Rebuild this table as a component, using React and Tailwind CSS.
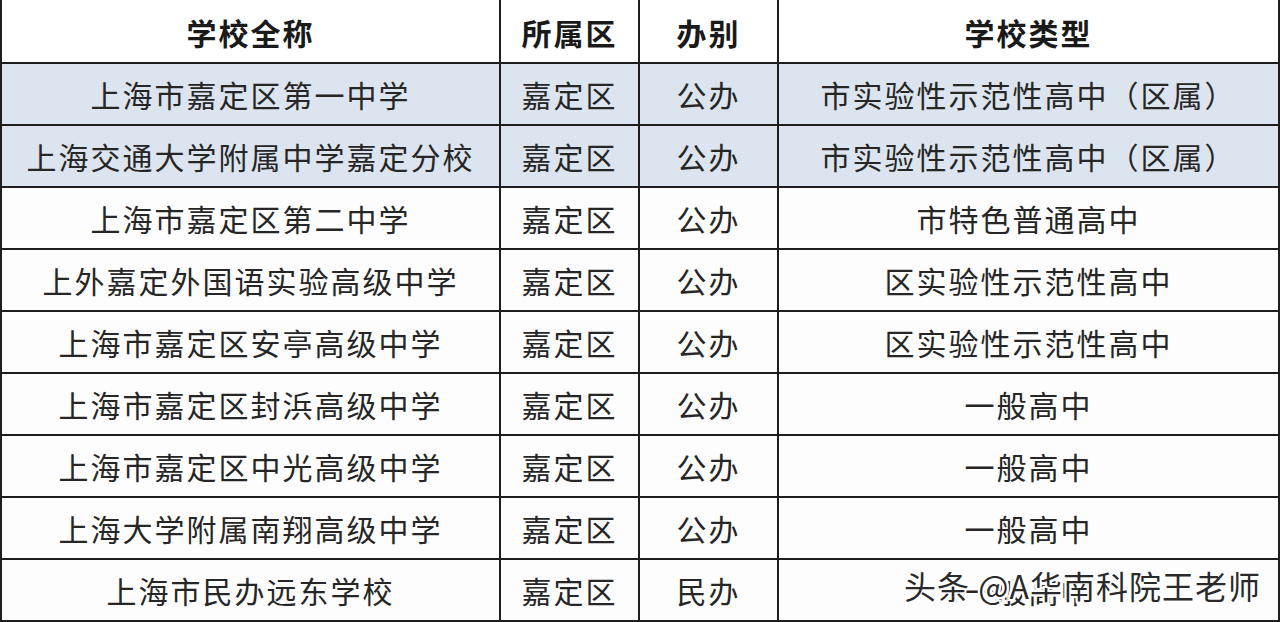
import React from 'react';

const rows = [
  ['上海市嘉定区第一中学', '嘉定区', '公办', '市实验性示范性高中（区属）', true],
  ['上海交通大学附属中学嘉定分校', '嘉定区', '公办', '市实验性示范性高中（区属）', true],
  ['上海市嘉定区第二中学', '嘉定区', '公办', '市特色普通高中', false],
  ['上外嘉定外国语实验高级中学', '嘉定区', '公办', '区实验性示范性高中', false],
  ['上海市嘉定区安亭高级中学', '嘉定区', '公办', '区实验性示范性高中', false],
  ['上海市嘉定区封浜高级中学', '嘉定区', '公办', '一般高中', false],
  ['上海市嘉定区中光高级中学', '嘉定区', '公办', '一般高中', false],
  ['上海大学附属南翔高级中学', '嘉定区', '公办', '一般高中', false],
  ['上海市民办远东学校', '嘉定区', '民办', '一般高中', false],
];

const font = { fontFamily: '"Noto Sans CJK SC", "Noto Sans", sans-serif' };

const App = () => {
  return (
    <div className="w-[1280px] h-[622px] bg-white relative overflow-hidden" style={font}>
      <div className="grid grid-cols-[497px_137px_137px_1fr] grid-rows-[62px_repeat(9,60px)] gap-[2px] px-[2px] pb-[2px] bg-[#1e1e1e] h-full">
        {['学校全称', '所属区', '办别', '学校类型'].map((h) => (
          <div key={h} className="bg-white flex items-center justify-center pt-[2px] text-[30px] font-bold tracking-[2px] text-[#1a1a1a]">
            {h}
          </div>
        ))}
        {rows.map((r, i) =>
          r.slice(0, 4).map((c, j) => (
            <div
              key={i + '-' + j}
              className={`flex items-center justify-center text-[30px] tracking-[2px] text-[#262626] ${r[4] ? 'bg-[#dce5ef]' : 'bg-[#fdfdfd]'}`}
            >
              {c}
            </div>
          ))
        )}
      </div>
      {/* 水印 */}
      <div
        className="absolute left-[904px] top-[569px] text-[32px] tracking-[1px] text-[#2a2a2a] whitespace-nowrap leading-none"
        style={{
          textShadow:
            '2px 0 0 #fff, -2px 0 0 #fff, 0 2px 0 #fff, 0 -2px 0 #fff, 2px 2px 0 #fff, -2px -2px 0 #fff, 2px -2px 0 #fff, -2px 2px 0 #fff',
        }}
      >
        头条 @A华南科院王老师
      </div>
    </div>
  );
};

export default App;
